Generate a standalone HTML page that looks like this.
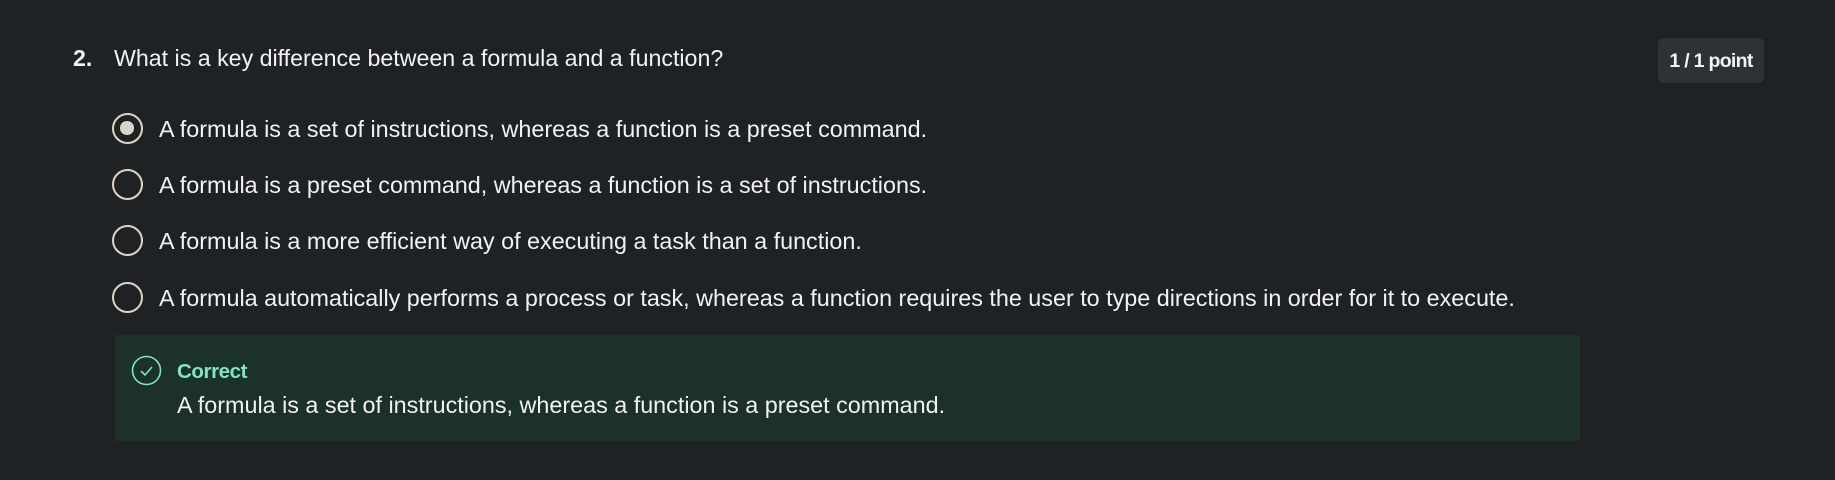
<!DOCTYPE html>
<html><head><style>
body{margin:0;width:1835px;height:480px;background:#1f2224;overflow:hidden;font-family:"Liberation Sans",sans-serif;color:#f2f2f2;position:relative}
.a{position:absolute;white-space:nowrap}
.q{font-size:23.2px;top:45px}
.opt{font-size:23.35px;left:159px}
.r{position:absolute;left:112px;width:31px;height:31px;border:2.8px solid #ddd4c8;border-radius:50%;box-sizing:border-box}
.r.s::after{content:"";position:absolute;left:6px;top:6px;width:13.5px;height:13.5px;border-radius:50%;background:#ddd4c8}
.box{position:absolute;left:115px;top:335px;width:1465px;height:106px;background:#1b3129}
.badge{position:absolute;left:1658px;top:38px;width:106px;height:45px;background:#2f3234;border-radius:6px;font-weight:bold;font-size:19.5px;text-align:center;line-height:46px;letter-spacing:-0.7px}
</style></head><body>
<div class="a q" style="left:73px;font-weight:bold">2.</div>
<div class="a q" style="left:114px">What is a key difference between a formula and a function?</div>
<div class="badge">1 / 1 point</div>
<div class="r s" style="top:113px"></div>
<div class="a opt" style="top:116px">A formula is a set of instructions, whereas a function is a preset command.</div>
<div class="r" style="top:169px"></div>
<div class="a opt" style="top:172px">A formula is a preset command, whereas a function is a set of instructions.</div>
<div class="r" style="top:225px"></div>
<div class="a opt" style="top:228px">A formula is a more efficient way of executing a task than a function.</div>
<div class="r" style="top:282px"></div>
<div class="a opt" style="top:285px">A formula automatically performs a process or task, whereas a function requires the user to type directions in order for it to execute.</div>
<div class="box"></div>
<svg class="a" style="left:131px;top:355px" width="31" height="31" viewBox="0 0 31 31"><circle cx="15.5" cy="15.5" r="14" fill="none" stroke="#7de6c6" stroke-width="1.6"/><path d="M10 16l4 4 7-8" fill="none" stroke="#7de6c6" stroke-width="1.6"/></svg>
<div class="a" style="left:177px;top:360px;font-size:20.5px;font-weight:bold;color:#7de6c6;letter-spacing:-0.4px">Correct</div>
<div class="a" style="left:177px;top:392px;font-size:23.35px">A formula is a set of instructions, whereas a function is a preset command.</div>
</body></html>
